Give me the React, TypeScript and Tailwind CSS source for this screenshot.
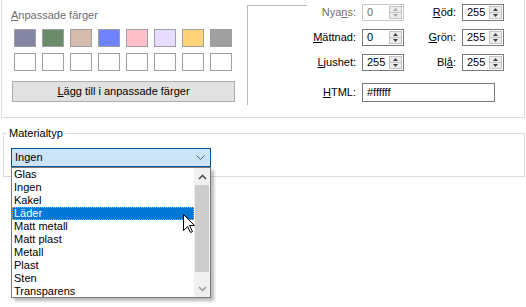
import React from "react";

const swatches = ["#8585a6", "#6b8c6b", "#d5bcaf", "#6f82ff", "#ffc0cb", "#e8dcff", "#ffd478", "#a0a0a0"];

const materials = ["Glas", "Ingen", "Kakel", "Läder", "Matt metall", "Matt plast", "Metall", "Plast", "Sten", "Transparens"];

const Spin = ({ disabled }: { disabled?: boolean }) => {
  const fill = disabled ? "#a8a8a8" : "#404040";
  return (
    <div className="flex flex-col w-[13px] border border-[#c4c4c4] bg-[#ececec]">
      <div className="flex-1 flex items-center justify-center border-b border-[#c4c4c4]">
        <svg width="5" height="3" viewBox="0 0 5 3">
          <path d="M2.5 0 L5 3 L0 3 Z" fill={fill} />
        </svg>
      </div>
      <div className="flex-1 flex items-center justify-center">
        <svg width="5" height="3" viewBox="0 0 5 3">
          <path d="M0 0 L5 0 L2.5 3 Z" fill={fill} />
        </svg>
      </div>
    </div>
  );
};

const NumBox = ({ value, disabled, wide }: { value: string; disabled?: boolean; wide?: boolean }) => (
  <div
    className={`flex h-[17px] ${wide ? "w-[42px]" : "w-[42px]"} p-[1px] bg-white border ${
      disabled ? "border-[#c8c8c8] text-[#6d6d6d]" : "border-[#7a7a7a] text-black"
    }`}
  >
    <span className="flex-1 pl-[3px] leading-[13px]">{value}</span>
    <Spin disabled={disabled} />
  </div>
);

const Label = ({ children, w, disabled }: { children: React.ReactNode; w: string; disabled?: boolean }) => (
  <span className={`${w} text-right mr-[6px] ${disabled ? "text-[#6d6d6d]" : "text-black"}`}>{children}</span>
);

export default function App() {
  return (
    <div className="relative w-[526px] h-[307px] overflow-hidden bg-white text-[11px] leading-[13px] text-black font-['Liberation_Sans',Arial,sans-serif]">
      {/* top panel */}
      <div className="ml-[1px] w-[524px] h-[118px] flex border-l border-r border-b border-[#dcdcdc]">
        <div className="w-[245px] flex flex-col">
          <span className="ml-[9px] mt-[9px] text-[#6d6d6d]">
            <u>A</u>npassade färger
          </span>
          <div className="ml-[12px] mt-[7px] grid grid-cols-[repeat(8,22px)] gap-x-[6px] gap-y-[6px]">
            {swatches.map((c) => (
              <div key={c} className="h-[18px] border border-[#a0a0a0]" style={{ background: c }} />
            ))}
            {swatches.map((c) => (
              <div key={"e" + c} className="h-[18px] border border-[#a0a0a0] bg-white" />
            ))}
          </div>
          <button className="ml-[10px] mt-[10px] w-[223px] h-[21px] bg-[#e1e1e1] border border-[#adadad] text-center">
            <u>L</u>ägg till i anpassade färger
          </button>
        </div>

        <div className="w-[60px] h-[100px] mt-[5px] border-l border-t border-[#b9b9b9]" />

        <div className="flex flex-col pt-[4px]">
          <div className="flex items-center h-[17px]">
            <Label w="w-[49px]" disabled>
              Nya<u>n</u>s:
            </Label>
            <NumBox value="0" disabled />
            <Label w="w-[52px]">
              <u>R</u>öd:
            </Label>
            <NumBox value="255" />
          </div>
          <div className="flex items-center h-[17px] mt-[8px]">
            <Label w="w-[49px]">
              <u>M</u>ättnad:
            </Label>
            <NumBox value="0" />
            <Label w="w-[52px]">
              <u>G</u>rön:
            </Label>
            <NumBox value="255" />
          </div>
          <div className="flex items-center h-[17px] mt-[8px]">
            <Label w="w-[49px]">
              <u>L</u>jushet:
            </Label>
            <NumBox value="255" />
            <Label w="w-[52px]">
              Bl<u>å</u>:
            </Label>
            <NumBox value="255" />
          </div>
          <div className="flex items-center h-[19px] mt-[12px]">
            <Label w="w-[49px]">
              <u>H</u>TML:
            </Label>
            <div className="w-[133px] h-[19px] border border-[#7a7a7a] pl-[4px] flex items-center">#ffffff</div>
          </div>
        </div>
      </div>

      {/* material group */}
      <fieldset className="ml-[3px] mt-[9px] w-[522px] border border-[#dcdcdc] pb-[9px]">
        <legend className="ml-[3px] px-[2px]">Materialtyp</legend>
        <div className="ml-[7px] mt-[8px] w-[200px] h-[19px] flex items-center justify-between bg-[#cce4f7] border border-[#005499] pl-[3px] pr-[5px]">
          <span>Ingen</span>
          <svg width="9" height="5" viewBox="0 0 9 5">
            <path d="M0.5 0.5 L4.5 4.5 L8.5 0.5" fill="none" stroke="#606060" strokeWidth="1" />
          </svg>
        </div>
      </fieldset>

      {/* dropdown list */}
      <div className="absolute left-[11px] top-[167px] w-[200px] h-[131px] flex bg-white border border-[#7a7a7a] shadow-[3px_3px_3px_rgba(0,0,0,0.28)]">
        <div className="w-[182px] flex flex-col">
          {materials.map((m) => (
            <div
              key={m}
              className={`h-[13px] pl-[2px] ${
                m === "Läder" ? "bg-[#0078d7] text-white outline-1 outline-dotted outline-[#f0a050] -outline-offset-1" : ""
              }`}
            >
              {m}
            </div>
          ))}
        </div>
        <div className="w-[16px] flex flex-col bg-[#f0f0f0]">
          <div className="h-[17px] flex items-center justify-center">
            <svg width="9" height="6" viewBox="0 0 9 6">
              <path d="M1 5 L4.5 1.5 L8 5" fill="none" stroke="#505050" strokeWidth="1.6" />
            </svg>
          </div>
          <div className="h-[87px] mx-[1px] bg-[#cdcdcd]" />
          <div className="flex-1" />
          <div className="h-[16px] flex items-center justify-center">
            <svg width="9" height="6" viewBox="0 0 9 6">
              <path d="M1 1 L4.5 4.5 L8 1" fill="none" stroke="#a0a0a0" strokeWidth="1.6" />
            </svg>
          </div>
        </div>
      </div>

      {/* mouse cursor */}
      <svg className="absolute left-[183px] top-[214px]" width="13" height="20" viewBox="0 0 13 20">
        <path
          d="M0.5 0.5 L0.5 16.5 L4.5 12.5 L7.5 18.5 L9.5 17.5 L6.5 11.5 L11.5 11.5 Z"
          fill="white"
          stroke="black"
          strokeWidth="1"
          strokeLinejoin="miter"
        />
      </svg>
    </div>
  );
}
